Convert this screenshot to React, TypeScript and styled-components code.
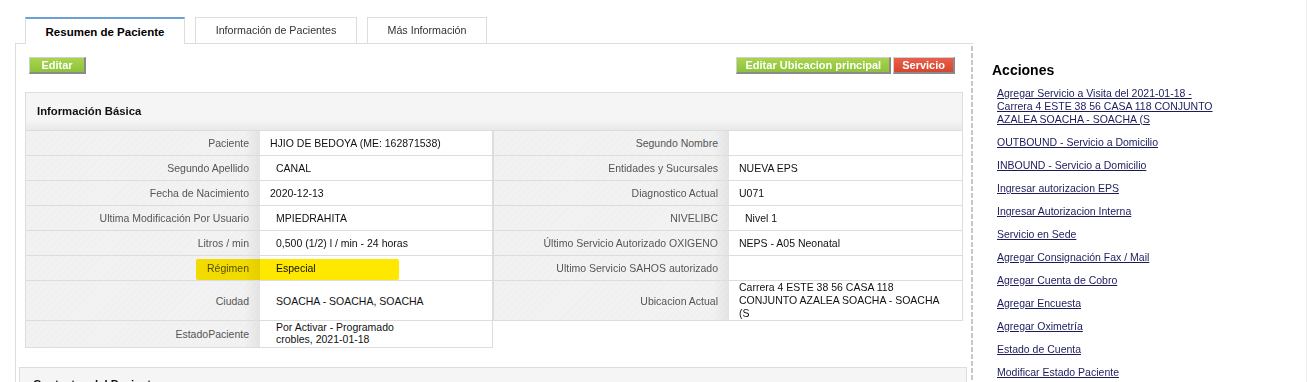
import styled, { createGlobalStyle } from 'styled-components';

type Row = {
  label: string;
  value: string;
  indent?: boolean;
  height?: number;
  lineHeight?: number;
  mark?: boolean;
};

const LEFT_ROWS: Row[] = [
  { label: 'Paciente', value: 'HJIO DE BEDOYA (ME: 162871538)' },
  { label: 'Segundo Apellido', value: 'CANAL', indent: true },
  { label: 'Fecha de Nacimiento', value: '2020-12-13' },
  { label: 'Ultima Modificación Por Usuario', value: 'MPIEDRAHITA', indent: true },
  { label: 'Litros / min', value: '0,500 (1/2) l / min - 24 horas', indent: true },
  { label: 'Régimen', value: 'Especial', indent: true, mark: true },
  { label: 'Ciudad', value: 'SOACHA - SOACHA, SOACHA', indent: true, height: 40 },
  {
    label: 'EstadoPaciente',
    value: 'Por Activar - Programado\ncrobles, 2021-01-18',
    indent: true,
    height: 27,
    lineHeight: 12,
  },
];

const RIGHT_ROWS: Row[] = [
  { label: 'Segundo Nombre', value: '' },
  { label: 'Entidades y Sucursales', value: 'NUEVA EPS' },
  { label: 'Diagnostico Actual', value: 'U071' },
  { label: 'NIVELIBC', value: 'Nivel 1', indent: true },
  { label: 'Último Servicio Autorizado OXIGENO', value: 'NEPS - A05 Neonatal' },
  { label: 'Ultimo Servicio SAHOS autorizado', value: '' },
  {
    label: 'Ubicacion Actual',
    value: 'Carrera 4 ESTE 38 56 CASA 118\nCONJUNTO AZALEA SOACHA - SOACHA\n(S',
    height: 40,
    lineHeight: 13,
  },
];

const ACTIONS = [
  'Agregar Servicio a Visita del 2021-01-18 - Carrera 4 ESTE 38 56 CASA 118 CONJUNTO AZALEA SOACHA - SOACHA (S',
  'OUTBOUND - Servicio a Domicilio',
  'INBOUND - Servicio a Domicilio',
  'Ingresar autorizacion EPS',
  'Ingresar Autorizacion Interna',
  'Servicio en Sede',
  'Agregar Consignación Fax / Mail',
  'Agregar Cuenta de Cobro',
  'Agregar Encuesta',
  'Agregar Oximetría',
  'Estado de Cuenta',
  'Modificar Estado Paciente',
];

const TABS = [
  { label: 'Resumen de Paciente', width: 160 },
  { label: 'Información de Pacientes', width: 162 },
  { label: 'Más Información', width: 120 },
];

const InfoTable = ({ rows, labelWidth, width }: { rows: Row[]; labelWidth: number; width: number }) => (
  <Table $width={width}>
    {rows.map((r) => (
      <TableRow key={r.label} $labelWidth={labelWidth} $height={r.height ?? 25}>
        <Label>{r.label}</Label>
        <Value $indent={r.indent}>
          <ValueText $lineHeight={r.lineHeight}>
            {r.value.split('\n').map((line, i) => (
              <span key={i}>
                {i > 0 && <br />}
                {line}
              </span>
            ))}
          </ValueText>
        </Value>
        {r.mark && <Marker />}
      </TableRow>
    ))}
  </Table>
);

const App = () => {
  return (
    <Page>
      <GlobalStyle />
      <Main>
        <TabBar>
          {TABS.map((t, i) => (
            <Tab key={t.label} $active={i === 0} $width={t.width}>
              {t.label}
            </Tab>
          ))}
        </TabBar>
        <Panel>
          <ButtonRow>
            <Btn $wide>Editar</Btn>
            <RightButtons>
              <Btn>Editar Ubicacion principal</Btn>
              <Btn $red>Servicio</Btn>
            </RightButtons>
          </ButtonRow>

          <InfoBox>
            <InfoHeader>Información Básica</InfoHeader>
            <Tables>
              <InfoTable rows={LEFT_ROWS} labelWidth={234} width={468} />
              <InfoTable rows={RIGHT_ROWS} labelWidth={235} width={470} />
            </Tables>
          </InfoBox>

          <NextBox>
            <InfoTitle>Contactos del Paciente</InfoTitle>
          </NextBox>
        </Panel>
      </Main>

      <Side>
        <SideTitle>Acciones</SideTitle>
        <ActionList>
          {ACTIONS.map((a) => (
            <ActionLink key={a} href="#">
              {a}
            </ActionLink>
          ))}
        </ActionList>
      </Side>
    </Page>
  );
};

export default App;

const GlobalStyle = createGlobalStyle`
  body {
    margin: 0;
    background: #fff;
    font-family: 'Liberation Sans', Arial, sans-serif;
    font-size: 10.5px;
    color: #111;
  }
`;

const Page = styled.div`
  display: flex;
  width: 1307px;
  height: 382px;
  overflow: hidden;
  box-sizing: border-box;
  border-right: 1px solid #ececec;
`;

const Main = styled.div`
  width: 958px;
  margin-left: 15px;
  padding-top: 17px;
  flex-shrink: 0;
`;

const TabBar = styled.div`
  display: flex;
  gap: 10px;
  padding-left: 10px;
  height: 26px;
  align-items: flex-start;
`;

const Tab = styled.div<{ $active?: boolean; $width: number }>`
  position: relative;
  z-index: 1;
  box-sizing: border-box;
  width: ${(p) => p.$width}px;
  height: ${(p) => (p.$active ? 27 : 26)}px;
  display: flex;
  align-items: center;
  justify-content: center;
  padding-bottom: ${(p) => (p.$active ? 0 : 2)}px;
  background: #fff;
  border: 1px solid #ddd;
  border-bottom: none;
  border-top: ${(p) => (p.$active ? '2px solid #6c9fd6' : '1px solid #ddd')};
  font-size: ${(p) => (p.$active ? '11.5px' : '10.7px')};
  font-weight: ${(p) => (p.$active ? 'bold' : 'normal')};
  color: ${(p) => (p.$active ? '#000' : '#333')};
`;

const Panel = styled.div`
  box-sizing: border-box;
  height: 340px;
  border-top: 1px solid #ddd;
  border-left: 1px solid #ddd;
  padding: 0 11px 0 9px;
  background: linear-gradient(to bottom, #c8c8c8 5px, transparent 5px) right 2px / 2px 7px repeat-y;
`;

const ButtonRow = styled.div`
  display: flex;
  justify-content: space-between;
  margin: 13px 7px 18px 4px;
`;

const RightButtons = styled.div`
  display: flex;
  gap: 2px;
`;

const Btn = styled.button<{ $red?: boolean; $wide?: boolean }>`
  box-sizing: border-box;
  height: 17px;
  min-width: ${(p) => (p.$wide ? '57px' : '0')};
  padding: 0 8px;
  font-family: inherit;
  font-size: 11px;
  font-weight: bold;
  line-height: 13px;
  color: #fff;
  border-style: solid;
  border-width: 1px 2px 2px 1px;
  border-color: #d0d0d0 #8a8a8a #8a8a8a #d0d0d0;
  background: ${(p) =>
    p.$red
      ? 'linear-gradient(#e8604a, #d6452f)'
      : 'linear-gradient(#a9d44e, #8dc23a)'};
  cursor: pointer;
`;

const InfoBox = styled.div`
  width: 938px;
`;

const InfoHeader = styled.div`
  box-sizing: border-box;
  height: 39px;
  display: flex;
  align-items: center;
  padding-left: 11px;
  padding-bottom: 2px;
  border: 1px solid #ddd;
  background: linear-gradient(to bottom, #f5f5f5 75%, #e8e8e8);
  font-size: 11.3px;
  font-weight: bold;
  color: #111;
`;

const InfoTitle = styled.div`
  font-size: 11.3px;
  font-weight: bold;
  color: #111;
`;

const Tables = styled.div`
  display: flex;
  align-items: flex-start;
`;

const Table = styled.div<{ $width: number }>`
  box-sizing: border-box;
  width: ${(p) => p.$width}px;
  border-left: 1px solid #ddd;
  border-right: 1px solid #ddd;
`;

const TableRow = styled.div<{ $labelWidth: number; $height: number }>`
  position: relative;
  box-sizing: border-box;
  display: grid;
  grid-template-columns: ${(p) => p.$labelWidth}px 1fr;
  height: ${(p) => p.$height}px;
  border-bottom: 1px solid #ddd;
`;

const Label = styled.div`
  display: flex;
  align-items: center;
  justify-content: flex-end;
  padding-right: 11px;
  color: #555;
  background:
    linear-gradient(to right, rgba(0, 0, 0, 0) 93%, rgba(0, 0, 0, 0.06)),
    repeating-linear-gradient(135deg, #f2f2f2 0 3px, #f0f0f0 3px 5px);
`;

const Value = styled.div<{ $indent?: boolean }>`
  display: flex;
  align-items: center;
  padding-left: ${(p) => (p.$indent ? 16 : 10)}px;
  color: #111;
  background: #fff;
`;

const ValueText = styled.div<{ $lineHeight?: number }>`
  line-height: ${(p) => (p.$lineHeight ? `${p.$lineHeight}px` : 'normal')};
  margin-top: ${(p) => (p.$lineHeight === 12 ? -2 : 0)}px;
`;

const Marker = styled.span`
  position: absolute;
  left: 170px;
  top: 3px;
  width: 203px;
  height: 21px;
  border-radius: 2px;
  background: #ffe800;
  mix-blend-mode: multiply;
  pointer-events: none;
`;

const NextBox = styled.div`
  box-sizing: border-box;
  margin: 19px -5px 0 -6px;
  height: 60px;
  padding: 10px 0 0 13px;
  border: 1px solid #ddd;
  background: #f5f5f5;
`;

const Side = styled.div`
  padding: 62px 0 0 19px;
`;

const SideTitle = styled.div`
  font-size: 14px;
  font-weight: bold;
  line-height: 16px;
  color: #000;
  margin-bottom: 9px;
`;

const ActionList = styled.div`
  display: flex;
  flex-direction: column;
  gap: 10px;
  width: 222px;
  padding-left: 5px;
`;

const ActionLink = styled.a`
  line-height: 13px;
  color: #1c1c5c;
  text-decoration: underline;
`;
